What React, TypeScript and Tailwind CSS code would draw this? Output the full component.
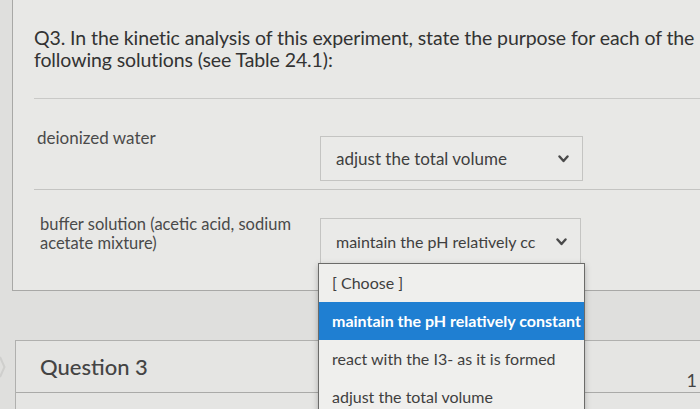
import React from 'react'

function Chevron() {
  return (
    <svg width="11" height="8" viewBox="0 0 11 8" className="shrink-0">
      <polyline points="1.5,1.5 5.5,6 9.5,1.5" fill="none" stroke="#4a4a4a" strokeWidth="2.4" strokeLinecap="round" strokeLinejoin="round" />
    </svg>
  )
}

const options = [
  '[ Choose ]',
  'maintain the pH relatively constant',
  'react with the I3- as it is formed',
  'adjust the total volume',
]

export default function App() {
  return (
    <div
      className="relative w-[700px] h-[409px] overflow-hidden bg-[#dfdfdd] text-[#3b3b3b]"
      style={{ fontFamily: 'Lato, "Open Sans", sans-serif' }}
    >
      {/* question card */}
      <div className="ml-[12px] h-[291px] border-l border-b border-[#a8a8a6] bg-[#e8e8e6] pl-[21px]">
        <div className="pt-[27px] text-[19.5px] leading-[22px] text-[#333] whitespace-nowrap tracking-[-0.1px]">
          <div>Q3. In the kinetic analysis of this experiment, state the purpose for each of the</div>
          <div>following solutions (see Table 24.1):</div>
        </div>

        <div className="mt-[27px] border-t border-[#c9c9c7]">
          <div className="grid grid-cols-[286px_263px] h-[90px]">
            <div className="pt-[29px] pl-[3px] text-[17px] leading-[20px] text-[#4a4a4a]">deionized water</div>
            <div className="mt-[37px] h-[45px] border border-[#c4c4c2] bg-[#eaeae8] flex items-center justify-between pl-[15px] pr-[13px] text-[17px] text-[#3f3f3f]">
              <span>adjust the total volume</span>
              <Chevron />
            </div>
          </div>
        </div>

        <div className="border-t border-[#c4c4c2]">
          <div className="grid grid-cols-[286px_261px]">
            <div className="pt-[25px] pl-[6px] text-[16.5px] leading-[19px] text-[#4a4a4a] whitespace-nowrap">
              buffer solution (acetic acid, sodium
              <br />
              acetate mixture)
            </div>
            <div className="mt-[28px] h-[47px] border border-[#c4c4c2] bg-[#eaeae8] flex items-center justify-between pl-[15px] pr-[13px] text-[16px] text-[#3f3f3f]">
              <span className="whitespace-nowrap">maintain the pH relatively cc</span>
              <Chevron />
            </div>
          </div>
        </div>
      </div>

      {/* next question header */}
      <div className="relative mt-[49px] ml-[15px] border-l border-t border-[#b0b0ae] bg-[#e5e5e3]">
        <div className="h-[52px] border-b border-[#aaaaa8] flex items-center justify-between pl-[24px] pr-[3px]">
          <span className="text-[22px] font-medium text-[#444]">Question 3</span>
          <span className="self-end mb-[1px] text-[18px] leading-[22px] text-[#444]">1</span>
        </div>
        <div className="h-[40px]" />
      </div>

      {/* left nav arrow stub */}
      <svg width="6" height="24" viewBox="0 0 6 24" className="absolute left-0 top-[355px]">
        <path d="M0 2 L4.5 12 L0 22" fill="none" stroke="#cfcfcd" strokeWidth="2" />
      </svg>

      {/* open dropdown */}
      <div className="absolute left-[318px] top-[263px] w-[267px] h-[160px] bg-[#efefed] border border-[#6b6b69] shadow-[0_2px_6px_rgba(0,0,0,0.25)]">
        {options.map((o, i) => (
          <div
            key={o}
            className={
              i === 1
                ? 'h-[38px] flex items-center pl-[13px] bg-[#1f7fd2] text-white font-bold text-[16px] whitespace-nowrap'
                : 'h-[38px] flex items-center pl-[13px] text-[#3f3f3f] text-[16px] whitespace-nowrap'
            }
          >
            {o}
          </div>
        ))}
      </div>
    </div>
  )
}
